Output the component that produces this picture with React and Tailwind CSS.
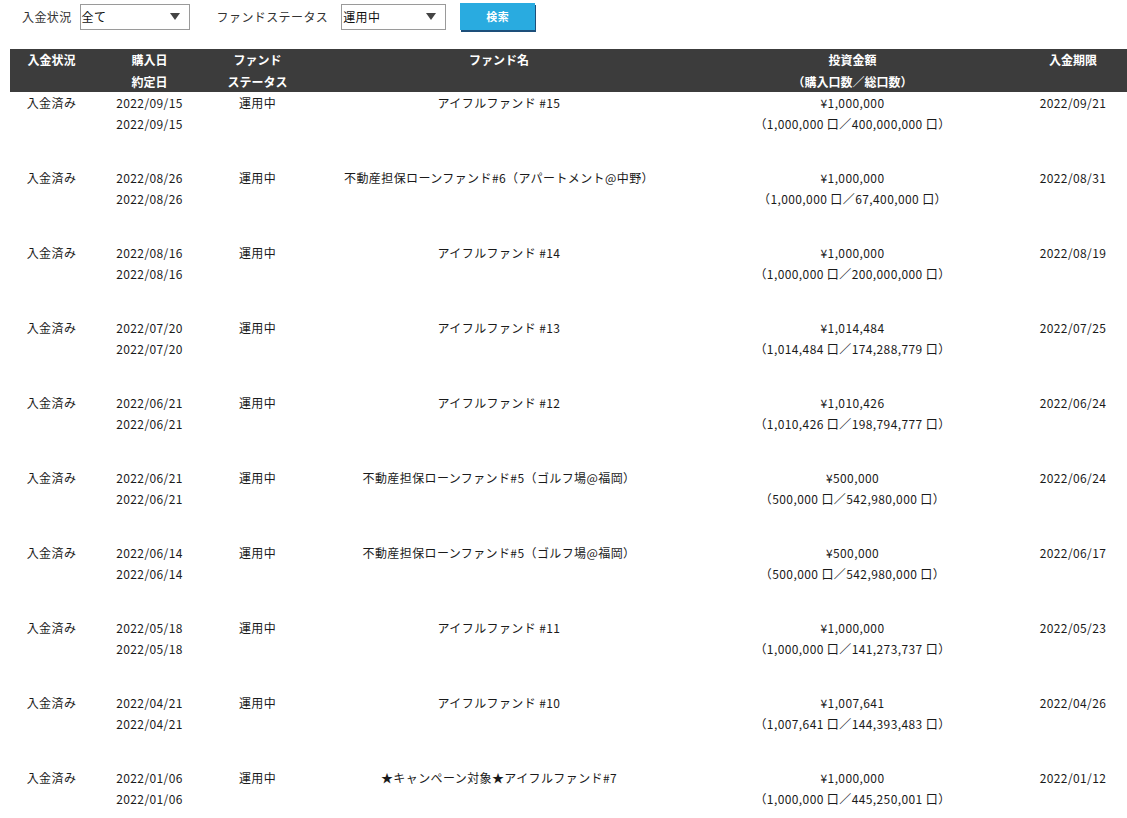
const rows = [
  { buy: "2022/09/15", name: "アイフルファンド #15", amount: "¥1,000,000", units: "1,000,000 口／400,000,000 口", limit: "2022/09/21" },
  { buy: "2022/08/26", name: "不動産担保ローンファンド#6（アパートメント@中野）", amount: "¥1,000,000", units: "1,000,000 口／67,400,000 口", limit: "2022/08/31" },
  { buy: "2022/08/16", name: "アイフルファンド #14", amount: "¥1,000,000", units: "1,000,000 口／200,000,000 口", limit: "2022/08/19" },
  { buy: "2022/07/20", name: "アイフルファンド #13", amount: "¥1,014,484", units: "1,014,484 口／174,288,779 口", limit: "2022/07/25" },
  { buy: "2022/06/21", name: "アイフルファンド #12", amount: "¥1,010,426", units: "1,010,426 口／198,794,777 口", limit: "2022/06/24" },
  { buy: "2022/06/21", name: "不動産担保ローンファンド#5（ゴルフ場@福岡）", amount: "¥500,000", units: "500,000 口／542,980,000 口", limit: "2022/06/24" },
  { buy: "2022/06/14", name: "不動産担保ローンファンド#5（ゴルフ場@福岡）", amount: "¥500,000", units: "500,000 口／542,980,000 口", limit: "2022/06/17" },
  { buy: "2022/05/18", name: "アイフルファンド #11", amount: "¥1,000,000", units: "1,000,000 口／141,273,737 口", limit: "2022/05/23" },
  { buy: "2022/04/21", name: "アイフルファンド #10", amount: "¥1,007,641", units: "1,007,641 口／144,393,483 口", limit: "2022/04/26" },
  { buy: "2022/01/06", name: "★キャンペーン対象★アイフルファンド#7", amount: "¥1,000,000", units: "1,000,000 口／445,250,001 口", limit: "2022/01/12" },
];

const cols = "grid grid-cols-[83px_113px_103px_380px_327px_114px]";

const FakeSelect = ({ value, width }) => (
  <div className={`${width} h-[26px] border border-[#9a9a9a] bg-white flex items-center justify-between pl-[1px] pr-[9px] text-[12px] text-[#111]`}>
    <span>{value}</span>
    <svg width="10" height="7" viewBox="0 0 10 7">
      <path d="M0 0 L10 0 L5 7 Z" fill="#444" />
    </svg>
  </div>
);

const App = () => {
  return (
    <div
      className="w-[1127px] h-[818px] overflow-hidden bg-white text-[12px] tracking-[0.4px] text-[#1a1a1a]"
      style={{ fontFamily: '"Noto Sans CJK JP", "Noto Sans", sans-serif' }}
    >
      <div className="flex items-center h-[30px] pt-[3px] pl-[22px]">
        <span className="text-[#333] mr-[8px]">入金状況</span>
        <FakeSelect value="全て" width="w-[110px]" />
        <span className="text-[#333] ml-[27px] mr-[13px]">ファンドステータス</span>
        <FakeSelect value="運用中" width="w-[105px]" />
        <button className="ml-[14px] w-[75px] h-[27px] bg-[#29abe0] text-white font-bold text-[11px] shadow-[1px_2px_0_#1d4f7a]">
          検索
        </button>
      </div>

      <div className="mt-[19px] ml-[10px] w-[1120px]">
        <div className={`${cols} h-[43px] bg-[#3c3c3c] text-white font-bold leading-[22px] text-center tracking-normal`}>
          <div>入金状況</div>
          <div>購入日<br />約定日</div>
          <div>ファンド<br />ステータス</div>
          <div>ファンド名</div>
          <div>投資金額<br />（購入口数／総口数）</div>
          <div>入金期限</div>
        </div>
        {rows.map((r, i) => (
          <div key={i} className={`${cols} h-[75px] leading-[21px] text-center`}>
            <div>入金済み</div>
            <div>{r.buy}<br />{r.buy}</div>
            <div>運用中</div>
            <div>{r.name}</div>
            <div>{r.amount}<br />（{r.units}）</div>
            <div>{r.limit}</div>
          </div>
        ))}
      </div>
    </div>
  );
};

export default App;
